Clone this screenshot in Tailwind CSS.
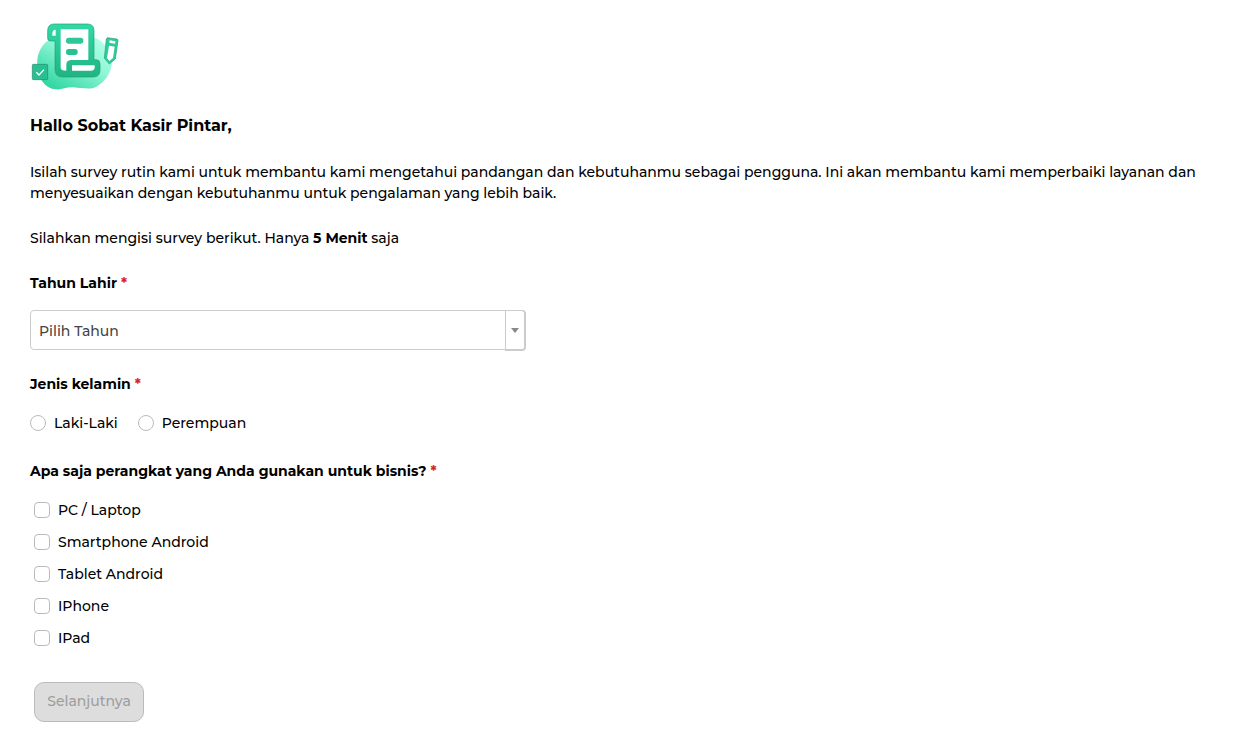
<!DOCTYPE html>
<html lang="id">
<head>
<meta charset="utf-8">
<meta name="viewport" content="width=device-width, initial-scale=1">
<title>Survey Kasir Pintar</title>
<script src="https://cdn.jsdelivr.net/npm/@tailwindcss/browser@4"></script>
</head>
<body class="bg-white text-sm leading-[21px] text-black font-[Montserrat,Inter,sans-serif]">
<main class="px-[30px] py-5">
  <svg class="block h-20 w-[100px]" viewBox="30 15 300 240" fill="none" aria-hidden="true">
    <defs>
      <linearGradient id="blob" x1="220" y1="60" x2="120" y2="225" gradientUnits="userSpaceOnUse"><stop stop-color="#b0ffe6"/><stop offset=".4" stop-color="#92f7d7"/><stop offset="1" stop-color="#35d8a4"/></linearGradient>
      <linearGradient id="ink" x1="0" y1="28" x2="0" y2="186" gradientUnits="userSpaceOnUse"><stop stop-color="#31d9a5"/><stop offset="1" stop-color="#20b482"/></linearGradient>
    </defs>
    <path d="M107 67C75 73 50 108 52 146C54 190 73 220 108 223C125 225 138 216 160 217C182 219 196 222 218 220C245 212 274 180 275 145C275 110 253 79 222 67Z" fill="url(#blob)"/>
    <path d="M101 27H202Q222 27 222 47V134H228Q240 134 240 146V166Q240 186 220 186H127Q105 186 105 163V78H91Q83 78 83 70V46Q84 27 101 27Z" fill="url(#ink)" stroke="#259c78" stroke-width="2"/>
    <path d="M107 44Q97 44 97 57V62H107ZM122 43H205V135H153Q139 136 139 149V167Q122 167 122 158ZM156 151H224V160Q222 167 215 167H156Z" fill="#fff"/>
    <rect x="138" y="68" width="52" height="18" rx="8" fill="#2fc797"/>
    <rect x="138" y="102" width="35" height="18" rx="8" fill="#2bc091"/>
    <path d="M262 68L291 72Q294 73 294 77L286 132L268 147L253 130L259 72Z" fill="#2fcb9a" stroke="#289f7c" stroke-width="2"/>
    <path d="M269 76L286 79L285 86L268 83ZM267 92L284 95L279 129L268 138L261 129Z" fill="#fff"/>
    <rect x="37" y="148" width="46" height="46" rx="3" fill="#29bf90" stroke="#218b69" stroke-width="2"/>
    <path d="M49 172L57 180L72 164" stroke="#fff" stroke-width="4"/>
  </svg>

  <h1 class="mt-3.5 text-base leading-6 font-bold">Hallo Sobat Kasir Pintar,</h1>
  <p class="mt-6 font-medium">Isilah survey rutin kami untuk membantu kami mengetahui pandangan dan kebutuhanmu sebagai pengguna. Ini akan membantu kami memperbaiki layanan dan menyesuaikan dengan kebutuhanmu untuk pengalaman yang lebih baik.</p>
  <p class="mt-6 font-medium">Silahkan mengisi survey berikut. Hanya <strong class="font-bold">5 Menit</strong> saja</p>

  <form class="mt-6 font-medium">
    <label for="tahun" class="block font-bold">Tahun Lahir <span class="text-[#e02020]">*</span></label>
    <div class="relative mt-4 w-full max-w-[496px]">
      <select id="tahun" class="block h-10 w-full appearance-none rounded border border-[#cccccc] bg-white pt-0.5 pr-6 pl-2 text-[#444444]">
        <option>Pilih Tahun</option>
      </select>
      <span class="pointer-events-none absolute top-0 right-0 flex h-[41px] w-[21px] items-center justify-center rounded-r border border-r-2 border-[#cccccc]">
        <svg class="h-[5px] w-2" viewBox="0 0 8 5" fill="#888888" aria-hidden="true"><path d="M0 0H8L4 5Z"/></svg>
      </span>
    </div>

    <fieldset class="mt-6">
      <legend class="font-bold">Jenis kelamin <span class="text-[#e02020]">*</span></legend>
      <div class="mt-[18px] flex flex-wrap gap-5 leading-5">
        <label class="flex items-center gap-2"><input type="radio" name="kelamin" class="size-4 appearance-none rounded-full border border-[#bbbbbb] checked:border-4 checked:border-[#20b482]">Laki-Laki</label>
        <label class="flex items-center gap-2"><input type="radio" name="kelamin" class="size-4 appearance-none rounded-full border border-[#bbbbbb] checked:border-4 checked:border-[#20b482]">Perempuan</label>
      </div>
    </fieldset>

    <fieldset class="mt-7">
      <legend class="font-bold">Apa saja perangkat yang Anda gunakan untuk bisnis? <span class="text-[#e02020]">*</span></legend>
      <div class="mt-[18px] flex flex-col items-start gap-3 pl-1 leading-5">
        <label class="flex items-center gap-2"><input type="checkbox" class="size-4 appearance-none rounded border border-[#bbbbbb] checked:bg-[#20b482]">PC / Laptop</label>
        <label class="flex items-center gap-2"><input type="checkbox" class="size-4 appearance-none rounded border border-[#bbbbbb] checked:bg-[#20b482]">Smartphone Android</label>
        <label class="flex items-center gap-2"><input type="checkbox" class="size-4 appearance-none rounded border border-[#bbbbbb] checked:bg-[#20b482]">Tablet Android</label>
        <label class="flex items-center gap-2"><input type="checkbox" class="size-4 appearance-none rounded border border-[#bbbbbb] checked:bg-[#20b482]">IPhone</label>
        <label class="flex items-center gap-2"><input type="checkbox" class="size-4 appearance-none rounded border border-[#bbbbbb] checked:bg-[#20b482]">IPad</label>
      </div>
    </fieldset>

    <button type="button" disabled class="mt-[34px] ml-1 block h-10 min-w-[110px] rounded-[10px] border border-[#bbbbbb] bg-[#dddddd] px-3 pb-0.5 font-medium text-[#9d9d9d]">Selanjutnya</button>
  </form>
</main>
</body>
</html>
